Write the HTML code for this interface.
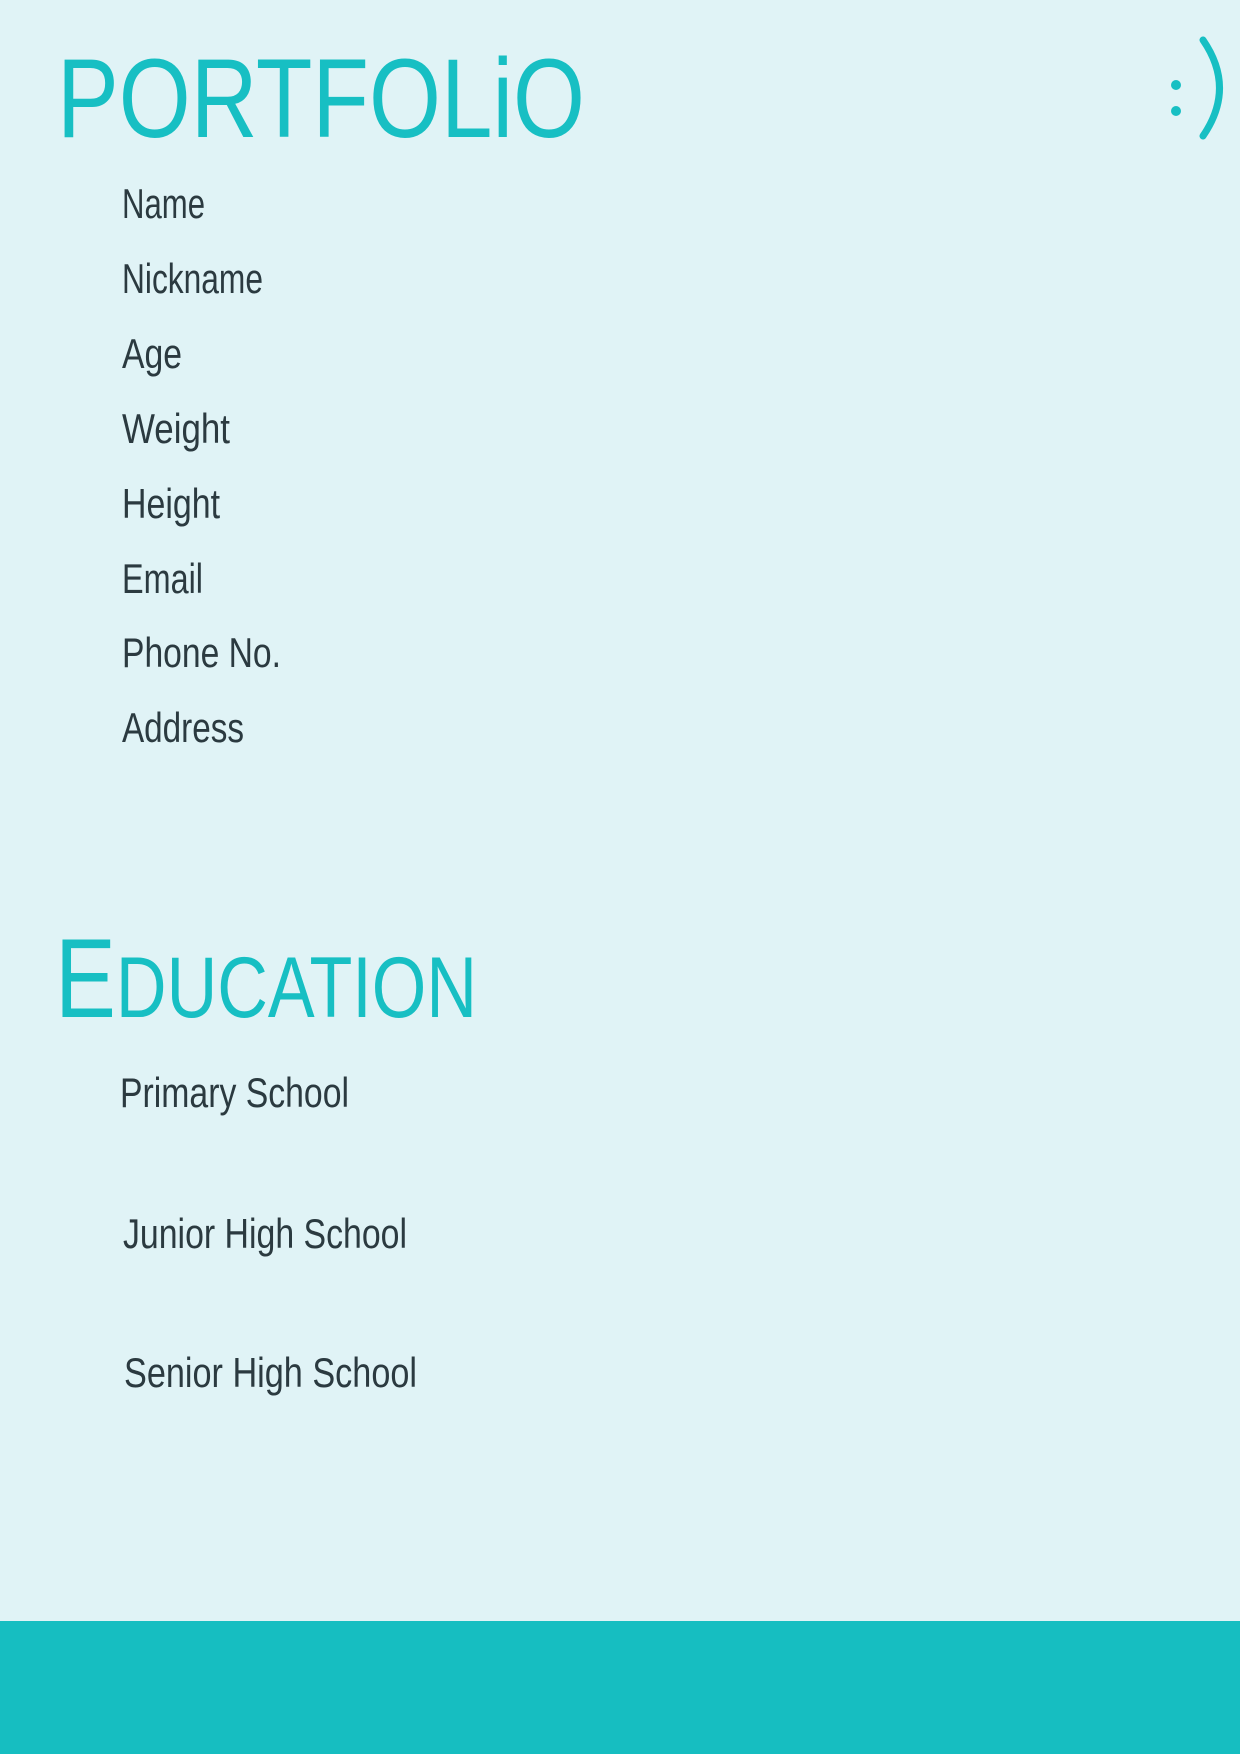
<!DOCTYPE html>
<html><head><meta charset="utf-8"><style>
html,body{margin:0;padding:0;background:#e0f3f6;}
svg{display:block}
</style></head><body>
<svg width="1240" height="1754" viewBox="0 0 1240 1754" xmlns="http://www.w3.org/2000/svg">
<rect width="1240" height="1754" fill="#e0f3f6"/>
<g font-family="Liberation Sans, DejaVu Sans, sans-serif" fill="#17bfc3">
<text x="57" y="137" font-size="112" textLength="528" lengthAdjust="spacingAndGlyphs">PORTFOLiO</text>
<text x="55" y="1017" font-size="112" textLength="422" lengthAdjust="spacingAndGlyphs">E<tspan font-size="86">DUCATION</tspan></text>
</g>
<circle cx="1176" cy="85" r="5" fill="#17bfc3"/>
<circle cx="1176" cy="111" r="5" fill="#17bfc3"/>
<path d="M1203 40 Q1236 88 1203 136" stroke="#17bfc3" stroke-width="7" fill="none" stroke-linecap="round"/>
<g font-family="Liberation Sans, DejaVu Sans, sans-serif" fill="#2b3a40" font-size="42">
<text x="122" y="218" textLength="83" lengthAdjust="spacingAndGlyphs">Name</text>
<text x="122" y="293" textLength="141" lengthAdjust="spacingAndGlyphs">Nickname</text>
<text x="122" y="368" textLength="60" lengthAdjust="spacingAndGlyphs">Age</text>
<text x="122" y="443" textLength="108" lengthAdjust="spacingAndGlyphs">Weight</text>
<text x="122" y="518" textLength="98" lengthAdjust="spacingAndGlyphs">Height</text>
<text x="122" y="593" textLength="81" lengthAdjust="spacingAndGlyphs">Email</text>
<text x="122" y="667" textLength="159" lengthAdjust="spacingAndGlyphs">Phone No.</text>
<text x="122" y="742" textLength="122" lengthAdjust="spacingAndGlyphs">Address</text>
<text x="120" y="1107" textLength="229" lengthAdjust="spacingAndGlyphs">Primary School</text>
<text x="123" y="1248" textLength="284" lengthAdjust="spacingAndGlyphs">Junior High School</text>
<text x="124" y="1387" textLength="293" lengthAdjust="spacingAndGlyphs">Senior High School</text>
</g>
<rect x="0" y="1621" width="1240" height="133" fill="#16bec1"/>
</svg>
</body></html>
